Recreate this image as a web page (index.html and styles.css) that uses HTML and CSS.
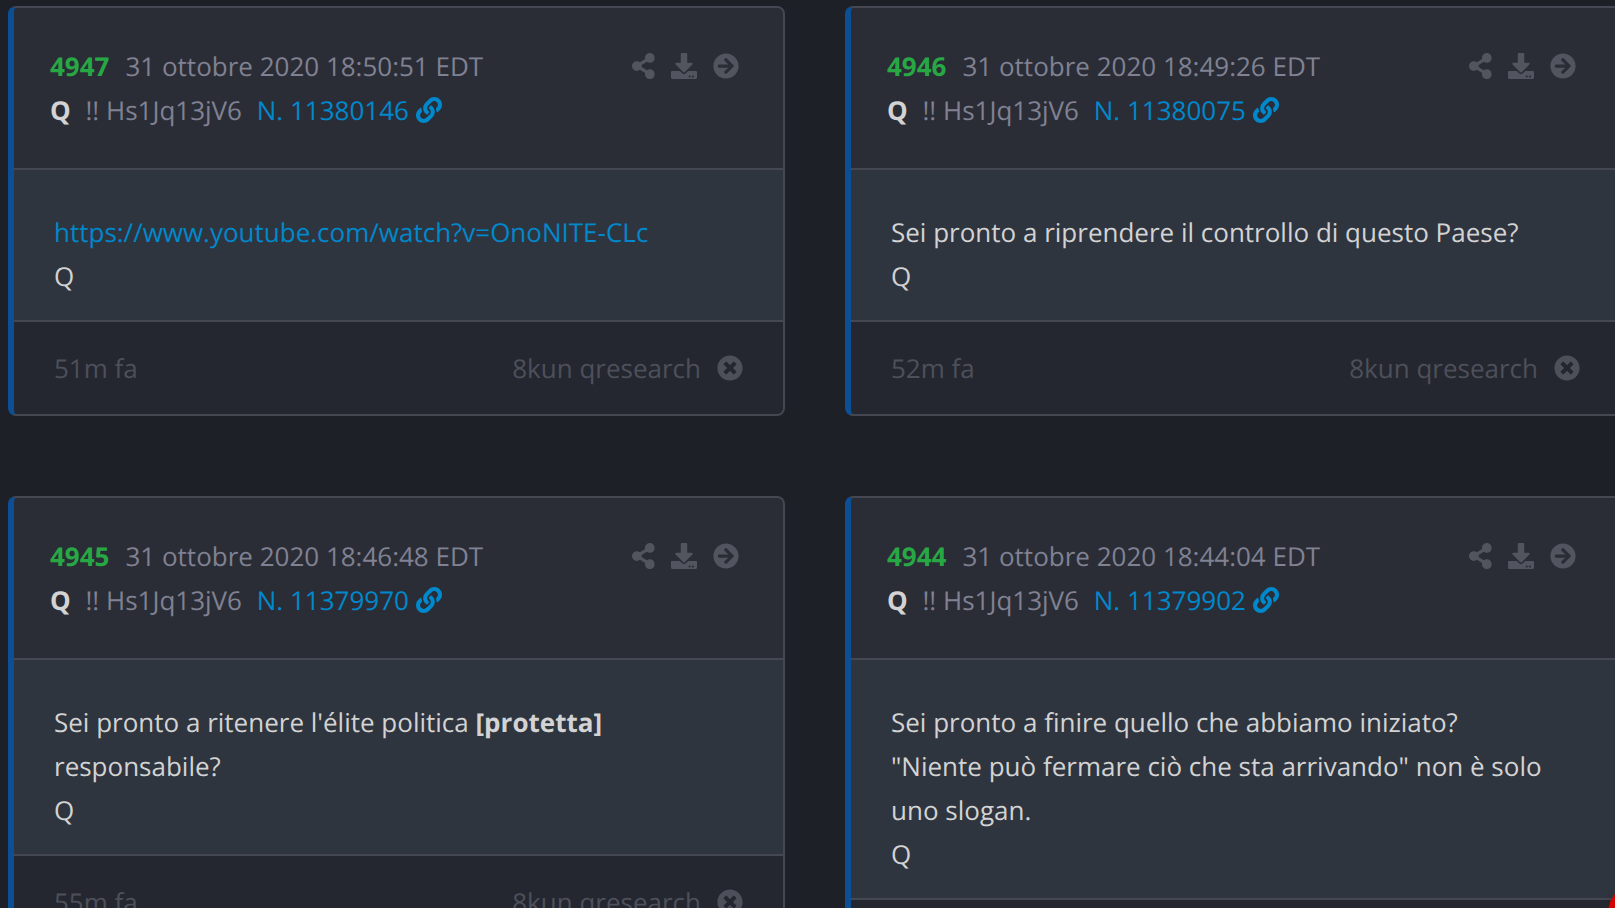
FILE: index.html
```html
<!DOCTYPE html>
<html lang="it">
<head>
    <meta charset="UTF-8">
    <meta name="viewport" content="width=device-width, initial-scale=1.0">
    <title>Post</title>
    <link rel="stylesheet" href="styles.css">
</head>
<body>

<svg class="sprite">
    <symbol id="share" viewBox="0 0 448 512"><path d="M352 320c-22.608 0-43.387 7.819-59.79 20.895l-102.486-64.054a96.551 96.551 0 0 0 0-41.683l102.486-64.054C308.613 184.181 329.392 192 352 192c53.019 0 96-42.981 96-96S405.019 0 352 0s-96 42.981-96 96c0 7.158.79 14.13 2.276 20.841L155.79 180.895C139.387 167.819 118.608 160 96 160c-53.019 0-96 42.981-96 96s42.981 96 96 96c22.608 0 43.387-7.819 59.79-20.895l102.486 64.054A96.301 96.301 0 0 0 256 416c0 53.019 42.981 96 96 96s96-42.981 96-96-42.981-96-96-96z"/></symbol>
    <symbol id="download" viewBox="0 0 512 512"><path d="M216 0h80c13.3 0 24 10.7 24 24v168h87.7c17.8 0 26.7 21.5 14.1 34.1L269.7 378.3c-7.5 7.5-19.8 7.5-27.3 0L90.1 226.1c-12.6-12.6-3.7-34.1 14.1-34.1H192V24c0-13.3 10.7-24 24-24zm296 376v112c0 13.3-10.7 24-24 24H24c-13.3 0-24-10.7-24-24V376c0-13.3 10.7-24 24-24h146.7l49 49c20.1 20.1 52.5 20.1 72.6 0l49-49H488c13.3 0 24 10.7 24 24zm-124 88c0-11-9-20-20-20s-20 9-20 20 9 20 20 20 20-9 20-20zm64 0c0-11-9-20-20-20s-20 9-20 20 9 20 20 20 20-9 20-20z"/></symbol>
    <symbol id="arrow" viewBox="0 0 512 512"><path d="M256 8c137 0 248 111 248 248S393 504 256 504 8 393 8 256 119 8 256 8zm-28.9 143.6l75.5 72.4H120c-13.3 0-24 10.7-24 24v16c0 13.3 10.7 24 24 24h182.6l-75.5 72.4c-9.7 9.3-9.9 24.8-.4 34.3l11 10.9c9.4 9.4 24.6 9.4 33.9 0L404.3 273c9.4-9.4 9.4-24.6 0-33.9L271.6 106.3c-9.4-9.4-24.6-9.4-33.9 0l-11 10.9c-9.5 9.6-9.3 25.1.4 34.4z"/></symbol>
    <symbol id="times" viewBox="0 0 512 512"><path d="M256 8C119 8 8 119 8 256s111 248 248 248 248-111 248-248S393 8 256 8zm121.6 313.1c4.7 4.7 4.7 12.3 0 17L338 377.6c-4.7 4.7-12.3 4.7-17 0L256 312l-65.1 65.6c-4.7 4.7-12.3 4.7-17 0L134.4 338c-4.7-4.7-4.7-12.3 0-17l65.6-65-65.6-65.1c-4.7-4.7-4.7-12.3 0-17l39.6-39.6c4.7-4.7 12.3-4.7 17 0l65 65.7 65.1-65.6c4.7-4.7 12.3-4.7 17 0l39.6 39.6c4.7 4.7 4.7 12.3 0 17L312 256l65.6 65.1z"/></symbol>
    <symbol id="link" viewBox="0 0 512 512"><path d="M326.612 185.391c59.747 59.809 58.927 155.698.36 214.59-.11.12-.24.25-.36.37l-67.2 67.2c-59.27 59.27-155.699 59.262-214.96 0-59.27-59.26-59.27-155.7 0-214.96l37.106-37.106c9.84-9.84 26.786-3.3 27.294 10.606.648 17.722 3.826 35.527 9.69 52.721 1.986 5.822.567 12.262-3.783 16.612l-13.087 13.087c-28.026 28.026-28.905 73.66-1.155 101.96 28.024 28.579 74.086 28.749 102.325.51l67.2-67.19c28.191-28.191 28.073-73.757 0-101.83-3.701-3.694-7.429-6.564-10.341-8.569a16.037 16.037 0 0 1-6.947-12.606c-.396-10.567 3.348-21.456 11.698-29.806l21.054-21.055c5.521-5.521 14.182-6.199 20.584-1.731a152.482 152.482 0 0 1 20.522 17.197zM467.547 44.449c-59.261-59.262-155.69-59.27-214.96 0l-67.2 67.2c-.12.12-.25.25-.36.37-58.566 58.892-59.387 154.781.36 214.59a152.454 152.454 0 0 0 20.521 17.196c6.402 4.468 15.064 3.789 20.584-1.731l21.054-21.055c8.35-8.35 12.094-19.239 11.698-29.806a16.037 16.037 0 0 0-6.947-12.606c-2.912-2.005-6.64-4.875-10.341-8.569-28.073-28.073-28.191-73.639 0-101.83l67.2-67.19c28.239-28.239 74.3-28.069 102.325.51 27.75 28.3 26.872 73.934-1.155 101.96l-13.087 13.087c-4.35 4.35-5.769 10.79-3.783 16.612 5.864 17.194 9.042 34.999 9.69 52.721.509 13.906 17.454 20.446 27.294 10.606l37.106-37.106c59.271-59.259 59.271-155.699.001-214.959z"/></symbol>
</svg>

<div class="posts">
    <div class="post">
        <div class="post-header">
            <div class="meta">
                <div class="line"><strong class="number">4947</strong><span>31 ottobre 2020 18:50:51 EDT</span></div>
                <div class="line"><strong class="name">Q</strong><span class="trip">!! Hs1Jq13jV6</span><a href="#">N. 11380146 <svg class="icon"><use href="#link"/></svg></a></div>
            </div>
            <div class="actions">
                <svg class="icon narrow"><use href="#share"/></svg>
                <svg class="icon"><use href="#download"/></svg>
                <svg class="icon"><use href="#arrow"/></svg>
            </div>
        </div>
        <div class="post-body">
            <a href="#">https://www.youtube.com/watch?v=OnoNITE-CLc</a><br>
            Q
        </div>
        <div class="post-footer">
            <span>51m fa</span>
            <span class="source">8kun qresearch <svg class="icon"><use href="#times"/></svg></span>
        </div>
    </div>

    <div class="post">
        <div class="post-header">
            <div class="meta">
                <div class="line"><strong class="number">4946</strong><span>31 ottobre 2020 18:49:26 EDT</span></div>
                <div class="line"><strong class="name">Q</strong><span class="trip">!! Hs1Jq13jV6</span><a href="#">N. 11380075 <svg class="icon"><use href="#link"/></svg></a></div>
            </div>
            <div class="actions">
                <svg class="icon narrow"><use href="#share"/></svg>
                <svg class="icon"><use href="#download"/></svg>
                <svg class="icon"><use href="#arrow"/></svg>
            </div>
        </div>
        <div class="post-body">
            Sei pronto a riprendere il controllo di questo Paese?<br>
            Q
        </div>
        <div class="post-footer">
            <span>52m fa</span>
            <span class="source">8kun qresearch <svg class="icon"><use href="#times"/></svg></span>
        </div>
    </div>

    <div class="post">
        <div class="post-header">
            <div class="meta">
                <div class="line"><strong class="number">4945</strong><span>31 ottobre 2020 18:46:48 EDT</span></div>
                <div class="line"><strong class="name">Q</strong><span class="trip">!! Hs1Jq13jV6</span><a href="#">N. 11379970 <svg class="icon"><use href="#link"/></svg></a></div>
            </div>
            <div class="actions">
                <svg class="icon narrow"><use href="#share"/></svg>
                <svg class="icon"><use href="#download"/></svg>
                <svg class="icon"><use href="#arrow"/></svg>
            </div>
        </div>
        <div class="post-body">
            Sei pronto a ritenere l'élite politica <strong>[protetta]</strong> responsabile?<br>
            Q
        </div>
        <div class="post-footer">
            <span>55m fa</span>
            <span class="source">8kun qresearch <svg class="icon"><use href="#times"/></svg></span>
        </div>
    </div>

    <div class="post">
        <div class="post-header">
            <div class="meta">
                <div class="line"><strong class="number">4944</strong><span>31 ottobre 2020 18:44:04 EDT</span></div>
                <div class="line"><strong class="name">Q</strong><span class="trip">!! Hs1Jq13jV6</span><a href="#">N. 11379902 <svg class="icon"><use href="#link"/></svg></a></div>
            </div>
            <div class="actions">
                <svg class="icon narrow"><use href="#share"/></svg>
                <svg class="icon"><use href="#download"/></svg>
                <svg class="icon"><use href="#arrow"/></svg>
            </div>
        </div>
        <div class="post-body">
            Sei pronto a finire quello che abbiamo iniziato?<br>
            "Niente può fermare ciò che sta arrivando" non è solo uno slogan.<br>
            Q
        </div>
        <div class="post-footer"></div>
    </div>
</div>

<div class="float-button"></div>

</body>
</html>
```

FILE: styles.css
```css
body {
    margin: 0;
    background-color: #1e2028;
    color: #d3d3d3;
    font-family: "Open Sans", "Noto Sans", sans-serif;
    font-size: 26px;
    line-height: 44px;
    text-rendering: geometricPrecision;
}

a {
    color: #0088cc;
    text-decoration: none;
}

.sprite {
    display: none;
}

.icon {
    width: 26px;
    height: 26px;
    fill: currentColor;
}

.icon.narrow {
    width: 22.75px;
}

.posts {
    display: grid;
    grid-template-columns: 777px 777px;
    gap: 80px 60px;
    align-items: start;
    height: 100vh;
    box-sizing: border-box;
    padding: 6px 8px 0;
    overflow: hidden;
}

.post {
    box-sizing: border-box;
    border: 2px solid #454852;
    border-left: 6px solid #0d4f94;
    border-radius: 8px;
    background-color: #2f353f;
    overflow: hidden;
}

.post-header {
    display: flex;
    justify-content: space-between;
    padding: 36px 44px 36px 36px;
    border-bottom: 2px solid #454852;
    background-color: #2a2d35;
    color: #808193;
}

.line {
    display: flex;
    white-space: pre;
}

.line a .icon {
    vertical-align: -3px;
}

.number {
    margin-right: 16px;
    color: #28a745;
}

.name {
    margin-right: 14.8px;
    color: #d3d3d3;
}

.trip {
    margin-right: 14.8px;
}

.actions {
    display: flex;
    gap: 16px;
    padding-top: 9px;
    color: #525560;
}

.post-body {
    padding: 40px 40px 22px;
}

.post-footer {
    display: flex;
    justify-content: space-between;
    min-height: 44px;
    padding: 24px 40px;
    border-top: 2px solid #454852;
    background-color: #24272f;
    color: #4d505b;
}

.source {
    display: flex;
    align-items: center;
    gap: 16px;
}

/* only its edge shows in the bottom corner */
.float-button {
    position: fixed;
    left: 1608px;
    top: 883px;
    width: 60px;
    height: 60px;
    border-radius: 50%;
    background-color: #d60000;
    box-shadow: 0 2px 10px rgba(0, 0, 0, 0.15);
}
```
